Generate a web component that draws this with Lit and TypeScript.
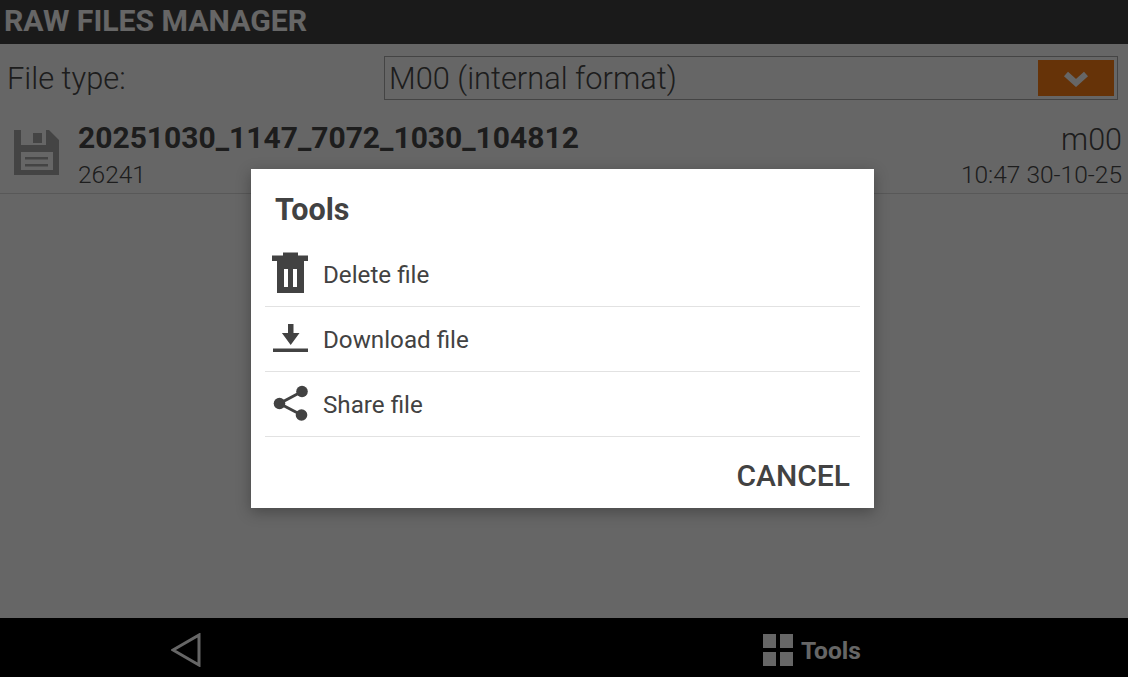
import { LitElement, html, css, svg } from 'lit';
import { customElement } from 'lit/decorators.js';

const trash = svg`<path d="M283 252.500h15v3h10v5.500h-36v-5.500h11z"/><path fill-rule="evenodd" d="M277 261h27v32h-27zM284 269v18h4v-18zM293 269v18h4v-18z"/>`;
const download = svg`<path d="M288 324h5.500v9h6l-8.800 12-8.800-12h6.100z"/><rect x="273" y="348.500" width="35" height="3.500"/>`;
const share = svg`<circle cx="279.500" cy="403.500" r="5.800"/><circle cx="302" cy="391.500" r="5.800"/><circle cx="301.500" cy="415" r="5.800"/><path d="M279.500 403.500 302 391.500M279.500 403.500 301.500 415" fill="none" stroke="#424242" stroke-width="3"/>`;

@customElement('app-root')
export class AppRoot extends LitElement {
  static styles = css`
    :host {
      display: block;
      position: relative;
      height: 677px;
      overflow: hidden;
      font-family: Roboto, sans-serif;
      color: #4a4a4a;
      background: #fff;
    }
    .page {
      display: flex;
      flex-direction: column;
      height: 100%;
    }
    .header {
      height: 44px;
      flex: none;
      display: flex;
      align-items: center;
      box-sizing: border-box;
      padding: 0 0 3px 4px;
      background: #424242;
      color: #fff;
      font-size: 30.200px;
      font-weight: 700;
    }
    .type-row {
      display: flex;
      align-items: center;
      height: 44px;
      margin: 12px 10px 0 7px;
      font-size: 30.800px;
      font-weight: 300;
    }
    .type-label { width: 377px; }
    .select {
      flex: 1;
      align-self: stretch;
      display: flex;
      align-items: center;
      justify-content: space-between;
      padding: 0 3px 0 4px;
      border: 1px solid #aaa;
    }
    .select-btn {
      width: 76px;
      height: 36px;
      display: flex;
      align-items: center;
      justify-content: center;
      background: #ff8016;
    }
    .select-btn svg { width: 26px; height: 17px; }
    .file {
      display: flex;
      align-items: center;
      height: 79px;
      margin-top: 15px;
      padding: 0 6px 0 14px;
      box-sizing: border-box;
      border-bottom: 1px solid #ddd;
    }
    .file > svg { width: 45px; height: 45px; margin: -4px 19px 0 0; fill: #aaa; }
    .file-main { flex: 1; }
    .name { font-size: 30px; font-weight: 700; line-height: 38px; padding-bottom: 4px; }
    .sub { font-size: 24.500px; font-weight: 300; line-height: 28px; }
    .meta { text-align: right; }
    .ext { font-size: 30.500px; font-weight: 300; line-height: 42px; }
    .spacer { flex: 1; }
    .nav {
      height: 59px;
      flex: none;
      box-sizing: border-box;
      padding-top: 4px;
      display: flex;
      align-items: center;
      background: #000;
      color: #fff;
    }
    .back { width: 30px; height: 34px; margin-left: 171px; }
    .tools {
      display: flex;
      align-items: center;
      gap: 8px;
      margin-left: 562px;
      font-size: 24.500px;
      font-weight: 700;
    }
    .tools span { padding-top: 2px; }
    .tools svg { width: 30px; height: 32px; fill: #fff; }
    .overlay {
      position: absolute;
      inset: 0;
      display: flex;
      align-items: center;
      justify-content: center;
      padding-right: 3px;
      background: rgba(0, 0, 0, 0.6);
    }
    .dialog {
      position: relative;
      width: 623px;
      height: 339px;
      box-sizing: border-box;
      padding: 0 14px;
      background: #fff;
      color: #424242;
      box-shadow: 0 4px 14px rgba(0, 0, 0, 0.3);
    }
    .title {
      height: 73px;
      display: flex;
      align-items: center;
      padding: 7px 0 0 10px;
      box-sizing: border-box;
      font-size: 30.500px;
      font-weight: 700;
    }
    .item {
      height: 65px;
      display: flex;
      align-items: center;
      box-sizing: border-box;
      padding: 2px 0 0 58px;
      border-bottom: 1px solid #e2e2e2;
      font-size: 24.200px;
    }
    .icons {
      position: absolute;
      left: 0;
      top: 0;
      width: 623px;
      height: 339px;
      fill: #424242;
      pointer-events: none;
    }
    .actions {
      display: flex;
      justify-content: flex-end;
      align-items: center;
      height: 77px;
      padding-right: 10px;
      font-size: 30px;
      font-weight: 500;
    }
  `;

  render() {
    return html`
      <div class="page">
        <div class="header">RAW FILES MANAGER</div>
        <div class="type-row">
          <div class="type-label">File type:</div>
          <div class="select">
            <span>M00 (internal format)</span>
            <div class="select-btn">
              <svg viewBox="0 0 26 17"><path d="M3 4l10 9 10-9" fill="none" stroke="#fff" stroke-width="6"/></svg>
            </div>
          </div>
        </div>
        <div class="file">
          <svg viewBox="0 0 45 45">
            <path fill-rule="evenodd" d="M0 0H7V15H32V0H35L45 10V45H0ZM19 3H28V13H19ZM7 22V40H39V22ZM11 27H34V29.500H11ZM11 34H34V36.500H11Z"/>
          </svg>
          <div class="file-main">
            <div class="name">20251030_1147_7072_1030_104812</div>
            <div class="sub">26241</div>
          </div>
          <div class="meta">
            <div class="ext">m00</div>
            <div class="sub">10:47 30-10-25</div>
          </div>
        </div>
        <div class="spacer"></div>
        <div class="nav">
          <svg class="back" viewBox="0 0 30 34"><path d="M2 17 28 2v30z" fill="none" stroke="#fff" stroke-width="3"/></svg>
          <div class="tools">
            <svg viewBox="0 0 30 32"><path d="M0 0h13v14H0zM17 0h13v14H17zM0 18h13v14H0zM17 18h13v14H17z"/></svg>
            <span>Tools</span>
          </div>
        </div>
      </div>
      <div class="overlay">
        <div class="dialog">
          <svg class="icons" viewBox="251 169 623 339">${trash}${download}${share}</svg>
          <div class="title">Tools</div>
          <div class="item">Delete file</div>
          <div class="item">Download file</div>
          <div class="item">Share file</div>
          <div class="actions">CANCEL</div>
        </div>
      </div>
    `;
  }
}
